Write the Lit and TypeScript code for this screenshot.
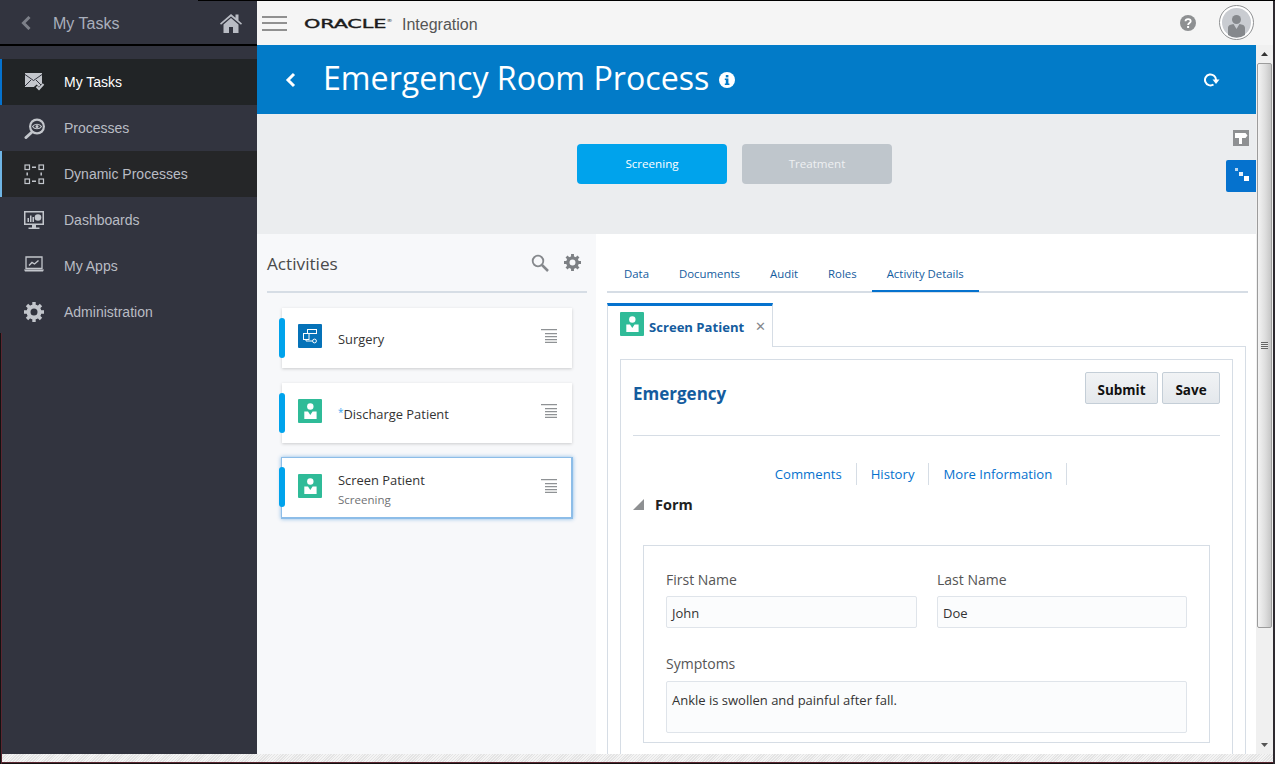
import { LitElement, css, html, svg } from "lit";
import { customElement } from "lit/decorators.js";

const navIcons: Record<string, unknown> = {
  tasks: svg`<path d="M1 1h17v14H1z" fill="#c3c6cc"/><path d="M1 2.500l8.500 6 8.500-6M1 14l6-6M18 14l-6-6" fill="none" stroke="#32343f" stroke-width="1"/><path d="M11 14l4 4.500 6-7" fill="none" stroke="#212426" stroke-width="4.500"/><path d="M12.500 14.500l2.500 2.500 4.500-5" fill="none" stroke="#c3c6cc" stroke-width="2"/>`,
  processes: svg`<circle cx="13" cy="8.500" r="8" fill="#c3c6cc"/><circle cx="13" cy="8.500" r="5.800" fill="#32343f"/><path d="M8.500 8.500c2-3 7-3 9 0-2 3-7 3-9 0z" fill="none" stroke="#c3c6cc" stroke-width="1.200"/><circle cx="13" cy="8.500" r="1.500" fill="#c3c6cc"/><path d="M7.500 14.500L2 19.500" stroke="#c3c6cc" stroke-width="3" stroke-linecap="round"/>`,
  dynamic: svg`<g fill="none" stroke="#c3c6cc" stroke-width="1.200"><rect x="1" y="1" width="4.500" height="4.500"/><rect x="15" y="1" width="4.500" height="4.500"/><rect x="1" y="15" width="4.500" height="4.500"/><rect x="15" y="15" width="4.500" height="4.500"/></g><path d="M8 3.200h4M8 17.200h4M3.200 8.500v3M17.200 8.500v3" stroke="#c3c6cc" stroke-width="1.500"/>`,
  dashboards: svg`<path d="M0 1h20v14H0z" fill="#c3c6cc"/><path d="M1.500 2.500h17v11h-17z" fill="#32343f"/><path d="M3.500 8h1.500v4H3.500zM6 5.500h1.500V12H6zM8.500 7H10v5H8.500z" fill="#c3c6cc"/><circle cx="14" cy="7.500" r="3.300" fill="#c3c6cc"/><path d="M8 15h4v2.500h3.500V19h-11v-1.500H8z" fill="#c3c6cc"/>`,
  apps: svg`<path d="M2 1h16v11.500H2z" fill="none" stroke="#c3c6cc" stroke-width="1.300"/><path d="M5 9.500l3-3 2.500 1.500 4-3.500" fill="none" stroke="#c3c6cc" stroke-width="1.400"/><path d="M0 13.500h20L19 15.500H1z" fill="#c3c6cc"/>`,
};

const gear = (c: string) => svg`<circle cx="10" cy="10" r="5.500" fill="none" stroke="${c}" stroke-width="4"/><g stroke="${c}" stroke-width="3.400"><path d="M10 0v4M10 16v4M0 10h4M16 10h4M3 3l2.800 2.800M14.200 14.200 17 17M17 3l-2.800 2.800M5.800 14.200 3 17"/></g>`;
navIcons.admin = gear("#c3c6cc");

const person = html`<svg viewBox="0 0 24 24" width="24" height="24"><rect width="24" height="24" rx="1" fill="#2fbb98"/><circle cx="12.300" cy="7.500" r="3.200" fill="#fff"/><path d="M6.300 12.500H10l2.300 3.500 2.300-3.500h4V20H6.300z" fill="#fff"/></svg>`;
const flow = html`<svg viewBox="0 0 24 24" width="24" height="24"><rect width="24" height="24" rx="1" fill="#0572b8"/><g fill="none" stroke="#fff" stroke-width="1"><rect x="9.500" y="5.500" width="9" height="4"/><rect x="5.500" y="9.500" width="5.500" height="6"/><path d="M8 15.500v1.500h6.500"/><circle cx="16.500" cy="17" r="1.900"/></g></svg>`;
const lines = html`<svg class="lines" viewBox="0 0 16 14" width="16" height="14"><path d="M0 .7h16M4 4.700h12M4 7.700h12M4 10.700h12M4 13.300h12" stroke="#8f9295" stroke-width="1.300"/></svg>`;

const nav = [
  ["My Tasks", "tasks", "active"],
  ["Processes", "processes", ""],
  ["Dynamic Processes", "dynamic", "hover"],
  ["Dashboards", "dashboards", ""],
  ["My Apps", "apps", ""],
  ["Administration", "admin", ""],
];

const cards = [
  { name: "Surgery", icon: flow },
  { name: "Discharge Patient", icon: person, mark: true },
  { name: "Screen Patient", sub: "Screening", icon: person, selected: true },
];

@customElement("app-root")
export class AppRoot extends LitElement {
  static styles = css`
    :host {
      display: block;
      height: 764px;
      overflow: hidden;
      position: relative;
      font-family: "Open Sans", sans-serif;
      background: #fff;
    }
    .top-line {
      position: absolute;
      left: 198px;
      right: 0;
      top: 0;
      height: 1px;
      background: #000;
    }
    .window {
      display: flex;
      height: 754px;
      padding-right: 2px;
    }
    .window-foot {
      height: 8px;
      background: repeating-linear-gradient(135deg, #e4e4e4 0 1px, #f4f4f4 1px 2px);
    }
    .window-line {
      height: 2px;
      box-sizing: border-box;
      background: #5a2630;
      border-bottom: 1px solid #111;
    }
    .right-edge {
      position: absolute;
      right: 0;
      top: 1px;
      bottom: 0;
      width: 2px;
      background: #2e2a30;
    }
    .left-edge {
      position: absolute;
      left: 0;
      top: 333px;
      bottom: 0;
      width: 2px;
      box-sizing: border-box;
      background: #5a2630;
      border-left: 1px solid #111;
    }

    /* left menu */
    .side {
      width: 257px;
      flex: none;
      background: #32343f;
      font-family: "Liberation Sans", sans-serif;
    }
    .side-head {
      display: flex;
      align-items: center;
      padding: 2px 15px 0 21px;
      box-sizing: border-box;
      border-bottom: 2px solid #000;
      height: 46px;
      color: #a9afbc;
      font-size: 16px;
    }
    .side-head span {
      margin-left: 22px;
      flex: 1;
      padding-top: 1px;
    }
    .side-list {
      padding-top: 13px;
    }
    .side-item {
      height: 46px;
      display: flex;
      align-items: center;
      font-size: 14px;
      color: #b9bcc4;
      border-left: 2px solid transparent;
      padding-left: 22px;
    }
    .side-item svg {
      width: 21px;
      height: 21px;
      margin-right: 19px;
    }
    .side-item.active {
      background: #212426;
      border-left-color: #0572ce;
      color: #fff;
    }
    .side-item.hover {
      background: #252628;
      border-left-color: #6fb5e5;
    }

    .main {
      flex: 1;
      min-width: 0;
      display: flex;
      flex-direction: column;
      margin-top: 1px;
    }
    .bar {
      height: 44px;
      flex: none;
      background: #f5f5f5;
      display: flex;
      align-items: center;
      padding: 0 19px 0 5px;
    }
    .burger {
      width: 25px;
      height: 15px;
      border-top: 2px solid #909090;
      border-bottom: 2px solid #909090;
      box-sizing: border-box;
      position: relative;
      margin-right: 17px;
    }
    .burger::after {
      content: "";
      position: absolute;
      left: 0;
      right: 0;
      top: 4.500px;
      height: 2px;
      background: #909090;
    }
    .logo {
      font-family: "DejaVu Sans", sans-serif;
      font-size: 13px;
      letter-spacing: -0.1px;
      -webkit-text-stroke: 0.4px #1c1c1c;
      color: #1c1c1c;
      transform: scaleX(1.6);
      transform-origin: left center;
      width: 98px;
      white-space: nowrap;
      margin-top: 1px;
    }
    .logo sup {
      font-size: 4px;
      vertical-align: 6px;
      -webkit-text-stroke: 0;
    }
    .product {
      font-family: "Liberation Sans", sans-serif;
      font-size: 16px;
      color: #555;
      flex: 1;
      margin-top: 4px;
    }
    .avatar {
      margin-left: 23px;
      width: 35px;
      height: 35px;
      margin-top: -1px;
    }

    .body {
      flex: 1;
      min-height: 0;
      display: flex;
    }
    .page {
      flex: 1;
      min-width: 0;
      display: flex;
      flex-direction: column;
    }
    .hero {
      height: 69px;
      flex: none;
      background: #027bc8;
      color: #fff;
      display: flex;
      align-items: center;
      padding: 0 36px 0 28px;
    }
    .hero h1 {
      font-size: 32.150px;
      font-weight: 400;
      margin: 0 10px 4px 27px;
    }
    .hero .grow {
      flex: 1;
    }
    .stages {
      height: 120px;
      flex: none;
      background: #ebedef;
      display: flex;
      gap: 15px;
      padding: 30px 0 0 320px;
      box-sizing: border-box;
      position: relative;
    }
    .stage {
      width: 150px;
      height: 40px;
      box-sizing: border-box;
      padding-bottom: 2px;
      border-radius: 4px;
      display: flex;
      align-items: center;
      justify-content: center;
      font-size: 11.600px;
      color: #fff;
      background: #00a3ec;
    }
    .stage.off {
      background: #bfc6cc;
      color: #eef0f2;
    }
    .rail {
      position: absolute;
      right: 0;
      top: 16px;
      display: flex;
      flex-direction: column;
      align-items: flex-end;
      gap: 14px;
    }
    .rail-sign {
      width: 16px;
      height: 16px;
      background: #8e9092;
      margin-right: 7px;
    }
    .rail-flow {
      width: 30px;
      height: 32px;
      background: #0572ce;
      border-radius: 2px 0 0 2px;
    }

    .split {
      flex: 1;
      min-height: 0;
      display: flex;
    }
    .activities {
      width: 339px;
      flex: none;
      background: #f7f8fa;
      padding: 0 9px 0 10px;
      box-sizing: border-box;
    }
    .act-head {
      border-bottom: 2px solid #d6dde5;
      display: flex;
      align-items: center;
      gap: 15px;
      padding: 3px 6px 1px 0;
      height: 53px;
      color: #4a4a4a;
      font-size: 17.200px;
    }
    .act-head span {
      flex: 1;
    }
    .act-head svg {
      margin-top: -2px;
    }
    .cards {
      display: flex;
      flex-direction: column;
      gap: 15px;
      padding: 15px 15px 0;
    }
    .card {
      position: relative;
      height: 60px;
      background: #fff;
      box-shadow: 0 1px 3px rgba(0, 0, 0, 0.18);
      display: flex;
      align-items: center;
      padding: 0 15px 0 16px;
      box-sizing: border-box;
      font-size: 12.900px;
      color: #333;
    }
    .card.selected {
      margin: -1px -1px -1px;
      height: 62px;
      border: 2px solid #8dbde8;
      border-width: 1px 2px 2px 1px;
      box-shadow: 0 0 4px rgba(5, 114, 206, 0.45);
      padding: 0 14px 0 16px;
    }
    .card::before {
      content: "";
      position: absolute;
      left: -3px;
      top: 10px;
      width: 6px;
      height: 40px;
      border-radius: 3px;
      background: #00a3ec;
    }
    .card.selected::before {
      left: -3px;
      top: 9px;
    }
    .card-icon {
      display: flex;
      margin: -4px 16px 0 0;
    }
    .card-text {
      flex: 1;
      padding-top: 2px;
    }
    .card-sub {
      font-size: 11.500px;
      color: #6f7073;
      margin-top: 3px;
    }
    .lines {
      margin-top: -4px;
    }
    .mark {
      color: #3aa6ef;
      font-size: 10px;
      vertical-align: 3px;
    }

    .detail {
      flex: 1;
      min-width: 0;
      background: #fff;
      padding: 0 8px 0 11px;
      overflow: hidden;
    }
    .tabs {
      display: flex;
      height: 59px;
      box-sizing: border-box;
      padding: 28px 0 0 2px;
      border-bottom: 2px solid #d6dde5;
    }
    .tab {
      padding: 4px 15px 0;
      height: 28px;
      box-sizing: border-box;
      font-size: 11.400px;
      color: #145c9e;
      white-space: nowrap;
    }
    .tab.active {
      border-bottom: 2px solid #0572ce;
      height: 30px;
    }
    .sub-tabs {
      margin-top: 10px;
      display: flex;
      height: 44px;
      margin-right: 2px;
    }
    .sub-tab {
      width: 166px;
      flex: none;
      box-sizing: border-box;
      border-top: 3px solid #0572ce;
      border-right: 1px solid #d6dde5;
      border-left: 1px solid #d6dde5;
      display: flex;
      align-items: center;
      padding: 0 8px 5px 12px;
      font-size: 13.100px;
      font-weight: 700;
      color: #145c9e;
      gap: 5px;
      white-space: nowrap;
    }
    .sub-tab svg {
      flex: none;
    }
    .sub-tab span {
      margin-top: 5px;
    }
    .sub-tab .close {
      margin: 3px 0 0 6px;
      color: #85888c;
      font-weight: 400;
      font-size: 13px;
    }
    .sub-rest {
      flex: 1;
      border-bottom: 1px solid #d6dde5;
    }
    .outer {
      border: 1px solid #d6dde5;
      border-top: 0;
      margin-right: 2px;
      padding: 12px 12px 0;
      height: 420px;
    }
    .inner {
      border: 1px solid #d6dde5;
      height: 440px;
      padding: 12px 12px 0;
    }
    .form-head {
      display: flex;
      align-items: flex-start;
      justify-content: space-between;
      height: 64px;
      box-sizing: border-box;
      border-bottom: 1px solid #d6dde5;
    }
    .form-head h2 {
      margin: 10px 0 0;
      font-size: 17px;
      font-weight: 700;
      color: #145c9e;
    }
    .buttons {
      display: flex;
      gap: 4px;
    }
    .btn {
      height: 32px;
      box-sizing: border-box;
      padding-top: 3px;
      border: 1px solid #c4ced7;
      border-radius: 2px;
      background: linear-gradient(#f1f3f5, #e4e8ec);
      display: flex;
      align-items: center;
      justify-content: center;
      font-size: 13.500px;
      font-weight: 700;
      color: #111;
      width: 73px;
    }
    .btn.save {
      width: 58px;
    }
    .links {
      display: flex;
      justify-content: center;
      margin-top: 27px;
      padding-right: 25px;
    }
    .links a {
      font-size: 13.150px;
      color: #0572ce;
      padding: 0 14px;
      line-height: 22px;
      border-right: 1px solid #d6dde5;
    }
    .section {
      display: flex;
      align-items: center;
      gap: 11px;
      margin-top: 8px;
      font-size: 14.500px;
      font-weight: 700;
      color: #222;
      height: 22px;
    }
    .tri {
      width: 0;
      height: 0;
      border-style: solid;
      border-width: 0 0 11px 11px;
      border-color: transparent transparent #8e9092 transparent;
    }
    .form-box {
      border: 1px solid #d6dde5;
      margin: 30px 10px 0;
      padding: 24px 22px 9px;
      display: grid;
      grid-template-columns: 251px 250px;
      column-gap: 20px;
      color: #555;
      font-size: 14px;
    }
    .field {
      display: flex;
      flex-direction: column;
    }
    .field.wide {
      grid-column: 1 / 3;
      margin-top: 26px;
    }
    .field label {
      line-height: 20px;
      margin-bottom: 6px;
    }
    .field.wide label {
      margin-bottom: 7px;
    }
    .input {
      height: 32px;
      box-sizing: border-box;
      border: 1px solid #dfe4ea;
      border-radius: 2px;
      background: #fbfcfd;
      color: #333;
      font-size: 13px;
      padding: 7px 5px 0;
    }
    .wide .input {
      height: 52px;
      padding: 9px 5px;
    }

    /* browser scrollbar */
    .scroll {
      width: 17px;
      flex: none;
      background: #f0f0f0;
      box-sizing: border-box;
      display: flex;
      flex-direction: column;
      align-items: center;
    }
    .arrow {
      height: 18px;
      flex: none;
      display: flex;
      align-items: center;
      justify-content: center;
    }
    .thumb {
      height: 565px;
      width: 15px;
      box-sizing: border-box;
      border: 1px solid #9c9c9c;
      border-radius: 2px;
      background: linear-gradient(90deg, #f3f3f3, #dedede 55%, #c6c6c6);
      display: flex;
      align-items: center;
      justify-content: center;
    }
    .grip {
      width: 7px;
      height: 7px;
      background: repeating-linear-gradient(#666 0 1px, #e8e8e8 1px 2px);
    }
    .track {
      flex: 1;
    }
  `;

  render() {
    return html`
      <div class="window">
        <aside class="side">
          <div class="side-head">
            <svg width="10" height="14" viewBox="0 0 10 14"><path d="M8.500 1 2.500 7l6 6" fill="none" stroke="#7d8089" stroke-width="3"/></svg>
            <span>My Tasks</span>
            <svg width="22" height="20" viewBox="0 0 22 20"><path d="M11 1 0 10.500l1 1.200L11 3.500l10 8.200 1-1.200-3.500-3V1.500h-3v3.200z" fill="#b9bcc4"/><path d="M11 5 3.500 11.500V20h5.500v-6h4v6h5.500v-8.500z" fill="#b9bcc4"/></svg>
          </div>
          <nav class="side-list">
            ${nav.map(
              ([label, icon, cls]) => html`
                <div class="side-item ${cls}">
                  <svg viewBox="0 0 21 21">${navIcons[icon]}</svg>
                  ${label}
                </div>
              `
            )}
          </nav>
        </aside>
        <div class="main">
          <header class="bar">
            <div class="burger"></div>
            <div class="logo">ORACLE<sup>®</sup></div>
            <div class="product">Integration</div>
            <svg width="16" height="16" viewBox="0 0 16 16"><circle cx="8" cy="8" r="8" fill="#8e9092"/><path d="M5.500 6.200C5.500 3.500 10.700 3.500 10.700 6.200 10.700 8 8.100 8 8.100 10" fill="none" stroke="#fff" stroke-width="1.800"/><rect x="7.100" y="11" width="2" height="2" fill="#fff"/></svg>
            <svg class="avatar" viewBox="0 0 35 35"><circle cx="17.500" cy="17.500" r="17" fill="#fff" stroke="#8e9092"/><circle cx="17.500" cy="17.500" r="14.500" fill="#c9ccd1"/><circle cx="17.500" cy="14.500" r="4.500" fill="#85888c"/><path d="M9 30v-7c0-3 3-3.500 5.500-4l3 5 3-5c2.500.5 5.500 1 5.500 4v7a14.500 14.500 0 0 1-17 0z" fill="#85888c"/></svg>
          </header>
          <div class="body">
            <div class="page">
              <div class="hero">
                <svg width="11" height="16" viewBox="0 0 11 16"><path d="M9 2 3 8l6 6" fill="none" stroke="#fff" stroke-width="3"/></svg>
                <h1>Emergency Room Process</h1>
                <svg width="16" height="16" viewBox="0 0 16 16"><circle cx="8" cy="8" r="8" fill="#fff"/><rect x="6.800" y="3" width="2.600" height="2.400" fill="#027bc8"/><path d="M5.800 6.600h3.600v5h1v1.400H5.800v-1.400h1v-3.600h-1z" fill="#027bc8"/></svg>
                <div class="grow"></div>
                <svg width="16" height="14" viewBox="0 0 16 14"><path d="M12 7A5.500 5.500 0 1 0 9.500 11.500" fill="none" stroke="#fff" stroke-width="2"/><path d="M8.500 6.500h7L12 11z" fill="#fff"/></svg>
              </div>
              <div class="stages">
                <div class="stage">Screening</div>
                <div class="stage off">Treatment</div>
                <div class="rail">
                  <svg class="rail-sign" viewBox="0 0 16 16"><path d="M2 3h10.500L14.500 5.500 12.500 8H9v6H6V8H2z" fill="#fff"/></svg>
                  <svg class="rail-flow" viewBox="0 0 30 32"><rect x="9" y="8" width="3" height="3" fill="#b9d8f2"/><rect x="13" y="12" width="4" height="4" fill="#e4f0fa"/><rect x="18" y="16" width="5" height="5" fill="#fff"/></svg>
                </div>
              </div>
              <div class="split">
                <section class="activities">
                  <div class="act-head">
                    <span>Activities</span>
                    <svg width="18" height="18" viewBox="0 0 18 18"><circle cx="7" cy="7" r="5.300" fill="none" stroke="#85888c" stroke-width="1.800"/><path d="M11 11l6 6" stroke="#85888c" stroke-width="2.500"/></svg>
                    <svg width="17" height="17" viewBox="0 0 20 20">${gear("#7d8084")}</svg>
                  </div>
                  <div class="cards">
                    ${cards.map(
                      (c) => html`
                        <div class="card ${c.selected ? "selected" : ""}">
                          <div class="card-icon">${c.icon}</div>
                          <div class="card-text">
                            <div>${c.mark ? html`<span class="mark">*</span>` : ""}${c.name}</div>
                            ${c.sub ? html`<div class="card-sub">${c.sub}</div>` : ""}
                          </div>
                          ${lines}
                        </div>
                      `
                    )}
                  </div>
                </section>
                <section class="detail">
                  <div class="tabs">
                    <div class="tab">Data</div>
                    <div class="tab">Documents</div>
                    <div class="tab">Audit</div>
                    <div class="tab">Roles</div>
                    <div class="tab active">Activity Details</div>
                  </div>
                  <div class="sub-tabs">
                    <div class="sub-tab">
                      ${person}
                      <span>Screen Patient</span>
                      <span class="close">✕</span>
                    </div>
                    <div class="sub-rest"></div>
                  </div>
                  <div class="outer">
                    <div class="inner">
                      <div class="form-head">
                        <h2>Emergency</h2>
                        <div class="buttons">
                          <div class="btn">Submit</div>
                          <div class="btn save">Save</div>
                        </div>
                      </div>
                      <div class="links">
                        <a>Comments</a>
                        <a>History</a>
                        <a>More Information</a>
                      </div>
                      <div class="section"><i class="tri"></i>Form</div>
                      <div class="form-box">
                        <div class="field">
                          <label>First Name</label>
                          <div class="input">John</div>
                        </div>
                        <div class="field">
                          <label>Last Name</label>
                          <div class="input">Doe</div>
                        </div>
                        <div class="field wide">
                          <label>Symptoms</label>
                          <div class="input">Ankle is swollen and painful after fall.</div>
                        </div>
                      </div>
                    </div>
                  </div>
                </section>
              </div>
            </div>
            <div class="scroll">
              <div class="arrow"><svg width="7" height="4"><path d="M0 4 3.500 0 7 4z" fill="#333"/></svg></div>
              <div class="thumb"><div class="grip"></div></div>
              <div class="track"></div>
              <div class="arrow"><svg width="7" height="4"><path d="M0 0h7L3.500 4z" fill="#555"/></svg></div>
            </div>
          </div>
        </div>
      </div>
      <div class="window-foot"></div>
      <div class="window-line"></div>
      <div class="top-line"></div>
      <div class="right-edge"></div>
      <div class="left-edge"></div>
    `;
  }
}
